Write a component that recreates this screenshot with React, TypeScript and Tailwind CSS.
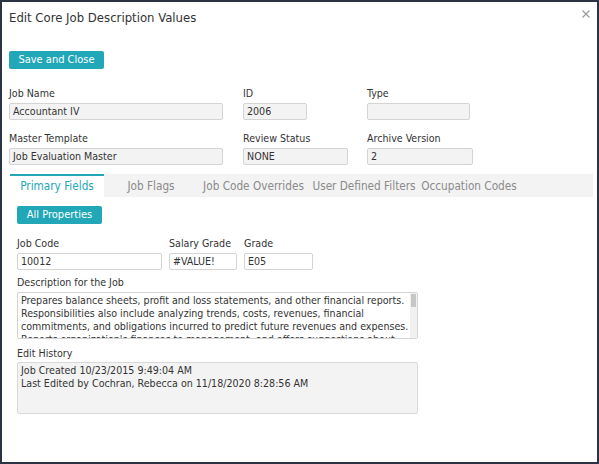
import React from 'react';

const font = 'font-["DejaVu_Sans_Condensed","DejaVu_Sans",sans-serif]';

const Field = ({ label, value, w, white }: { label: string; value: string; w: string; white?: boolean }) => (
  <div className="flex flex-col">
    <label className="text-[10.6px] leading-[13px] text-[#333] mb-[3px]">{label}</label>
    <div
      className={`${w} h-[17px] border border-[#d4d4d4] rounded-[2px] px-[3px] text-[10.6px] leading-[15px] text-[#333] ${
        white ? 'bg-white' : 'bg-[#f3f3f3]'
      }`}
    >
      {value}
    </div>
  </div>
);

export default function App() {
  const tabs = [
    { label: 'Primary Fields', w: 'w-[94px]' },
    { label: 'Job Flags', w: 'w-[94px]' },
    { label: 'Job Code Overrides', w: 'w-[111px]' },
    { label: 'User Defined Filters', w: 'w-[110px]' },
    { label: 'Occupation Codes', w: 'w-[100px]' },
  ];

  const descLines = [
    'Prepares balance sheets, profit and loss statements, and other financial reports.',
    'Responsibilities also include analyzing trends, costs, revenues, financial',
    'commitments, and obligations incurred to predict future revenues and expenses.',
    "Reports organization's finances to management, and offers suggestions about",
  ];

  return (
    <div className={`w-[599px] h-[464px] bg-white border-2 border-[#2b3345] ${font} text-[#333] relative overflow-hidden`}>
      {/* Header */}
      <div className="pl-[7px] pt-[8px] h-[30px]">
        <h1 className="text-[13px] leading-[16px] text-[#333]">Edit Core Job Description Values</h1>
      </div>
      <button className="absolute right-[7px] top-[8px] w-[8px] h-[8px]">
        <svg viewBox="0 0 8 8" className="w-[8px] h-[8px]" fill="none" stroke="#9a9a9a" strokeWidth="1.2">
          <path d="M0.5 0.5 L7.5 7.5 M7.5 0.5 L0.5 7.5" />
        </svg>
      </button>

      <div className="pl-[7px]">
        <div className="pt-[19px]">
          <button className="block w-[95px] h-[18px] bg-[#22a7b8] rounded-[2px] text-white text-[11px] leading-[18px]">
            Save and Close
          </button>
        </div>

        {/* Row 1 */}
        <div className="flex mt-[18px]">
          <div className="w-[234px]">
            <Field label="Job Name" value="Accountant IV" w="w-[214px]" />
          </div>
          <div className="w-[124px]">
            <Field label="ID" value="2006" w="w-[64px]" />
          </div>
          <Field label="Type" value="" w="w-[103px]" />
        </div>

        {/* Row 2 */}
        <div className="flex mt-[12px]">
          <div className="w-[234px]">
            <Field label="Master Template" value="Job Evaluation Master" w="w-[214px]" />
          </div>
          <div className="w-[124px]">
            <Field label="Review Status" value="NONE" w="w-[105px]" />
          </div>
          <Field label="Archive Version" value="2" w="w-[106px]" />
        </div>

        {/* Tabs */}
        <div className="mt-[9px] ml-[1px] w-[583px] h-[23px] bg-[#f3f3f3] flex">
          {tabs.map((t, i) => (
            <div
              key={t.label}
              className={`${t.w} h-[23px] text-center text-[11.7px] leading-[21px] ${
                i === 0 ? 'bg-white border-t-2 border-[#22a7b8] text-[#22a7b8]' : 'text-[#8a8a8a] pt-[2px]'
              }`}
            >
              {t.label}
            </div>
          ))}
        </div>

        {/* Tab panel */}
        <div className="pl-[8px]">
          <div className="pt-[9px]">
            <button className="block w-[85px] h-[18px] bg-[#22a7b8] rounded-[2px] text-white text-[11px] leading-[18px]">
              All Properties
            </button>
          </div>

          <div className="flex mt-[13px]">
            <div className="w-[152px]">
              <Field label="Job Code" value="10012" w="w-[145px]" white />
            </div>
            <div className="w-[75px]">
              <Field label="Salary Grade" value="#VALUE!" w="w-[68px]" white />
            </div>
            <Field label="Grade" value="E05" w="w-[69px]" white />
          </div>

          <div className="mt-[6px] text-[10.6px] leading-[13px]">Description for the Job</div>
          <div className="mt-[3px] w-[401px] h-[47px] border border-[#d4d4d4] rounded-[2px] bg-white flex overflow-hidden">
            <div className="flex-1 px-[3px] pt-[1px] text-[10.6px] leading-[13px] text-[#333] overflow-hidden">
              {descLines.map((l) => (
                <div key={l} className="whitespace-nowrap">
                  {l}
                </div>
              ))}
            </div>
            <div className="w-[7px] bg-[#f1f1f1] flex flex-col">
              <div className="h-[13px] mx-[1px] mt-[1px] bg-[#c6c6c6]" />
            </div>
          </div>

          <div className="mt-[8px] text-[10.6px] leading-[13px]">Edit History</div>
          <div className="mt-[2px] w-[401px] h-[52px] border border-[#d9d9d9] rounded-[2px] bg-[#f3f3f3] px-[3px] pt-[1px] text-[10.6px] leading-[13px]">
            <div>Job Created 10/23/2015 9:49:04 AM</div>
            <div>Last Edited by Cochran, Rebecca on 11/18/2020 8:28:56 AM</div>
          </div>
        </div>
      </div>
    </div>
  );
}
